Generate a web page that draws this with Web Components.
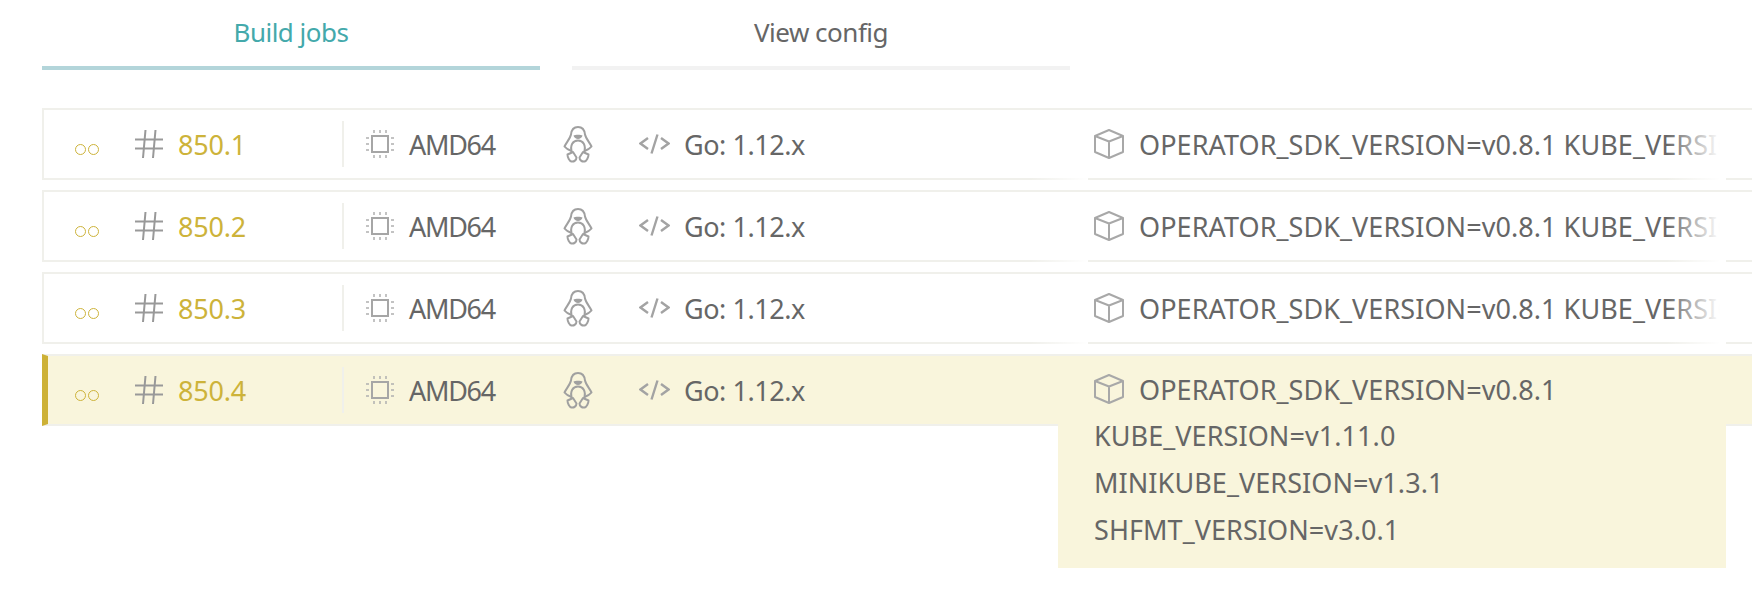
<!DOCTYPE html>
<html>
<head>
<meta charset="utf-8">
<title>Build jobs</title>
<style>
  html, body { margin: 0; height: 592px; overflow: hidden; background: #fff; }
  body { font-family: "Noto Sans", sans-serif; color: #666; }
</style>
</head>
<body>
<job-page>
  <job-tabs slot="tabs">
    <job-tab active>Build jobs</job-tab>
    <job-tab>View config</job-tab>
  </job-tabs>
  <job-row number="850.1">OPERATOR_SDK_VERSION=v0.8.1 KUBE_VERSION=v1.11.0 MINIKUBE_VERSION=v1.3.1 SHFMT_VERSION=v3.0.1</job-row>
  <job-row number="850.2">OPERATOR_SDK_VERSION=v0.8.1 KUBE_VERSION=v1.11.0 MINIKUBE_VERSION=v1.3.1 SHFMT_VERSION=v3.0.1</job-row>
  <job-row number="850.3">OPERATOR_SDK_VERSION=v0.8.1 KUBE_VERSION=v1.11.0 MINIKUBE_VERSION=v1.3.1 SHFMT_VERSION=v3.0.1</job-row>
  <job-row number="850.4" active>OPERATOR_SDK_VERSION=v0.8.1 KUBE_VERSION=v1.11.0 MINIKUBE_VERSION=v1.3.1 SHFMT_VERSION=v3.0.1</job-row>
</job-page>

<script>
class JobPage extends HTMLElement {
    constructor() {
        super();
        this.attachShadow({ mode: 'open' });
        this.shadowRoot.innerHTML = `
            <style>
                :host { display: block; padding: 0 0 0 42px; }
                .rows { display: flex; flex-direction: column; gap: 10px; margin-top: 38px; }
            </style>
            <slot name="tabs"></slot>
            <div class="rows"><slot></slot></div>
        `;
    }
}

class JobTabs extends HTMLElement {
    constructor() {
        super();
        this.attachShadow({ mode: 'open' });
        this.shadowRoot.innerHTML = `
            <style>
                :host { display: flex; gap: 32px; }
            </style>
            <slot></slot>
        `;
    }
}

class JobTab extends HTMLElement {
    constructor() {
        super();
        this.attachShadow({ mode: 'open' });
        this.shadowRoot.innerHTML = `
            <style>
                :host {
                    display: block;
                    box-sizing: border-box;
                    width: 498px;
                    height: 70px;
                    padding-top: 14px;
                    border-bottom: 4px solid #f2f2f2;
                    text-align: center;
                    font-size: 26px;
                    line-height: 36px;
                    letter-spacing: -0.5px;
                    color: #666;
                }
                :host([active]) {
                    border-bottom-color: #b3d5da;
                    color: #44a9ab;
                }
            </style>
            <slot></slot>
        `;
    }
}

const ICONS = {
    hash: `<svg width="28" height="28" viewBox="0 0 28 28" fill="none" stroke="#999" stroke-width="2">
        <path d="M0 9.5h28M0 18.5h28M10.5 0L8 28M20.5 0L18 28"/></svg>`,
    chip: `<svg width="28" height="28" viewBox="0 0 28 28" fill="none">
        <rect x="6" y="6" width="16" height="16" stroke="#a6a6a6" stroke-width="2"/>
        <path stroke="#b0b0b0" stroke-width="1.5" d="M8 0v3M14 0v3M20 0v3M8 25v3M14 25v3M20 25v3M0 8h3M0 14h3M0 20h3M25 8h3M25 14h3M25 20h3"/></svg>`,
    linux: `<svg width="30" height="37" viewBox="0 0 30 37" fill="none" stroke="#a0a0a0" stroke-width="2" stroke-linejoin="round">
        <path d="M8.5 25C6 24 3 22.5 1.5 20.5C3 17 7 13 8 8.5C8.5 3.5 11 1 15 1C19 1 21.5 3.5 22 8.5C23 13 27 17 28.5 20.5C27 22.5 24 24 21.5 25"/>
        <path d="M9 26.5C6.5 19 10 14.5 15 14.5C20 14.5 23.5 19 21 26.5"/>
        <path fill="#a0a0a0" stroke="none" d="M10.5 9.5C12 8.5 18 8.5 19.5 9.5C19 11.5 17 13 15 13C13 13 11 11.5 10.5 9.5Z"/>
        <path d="M4.5 28.5L10 26L13.5 31.5C13.5 34 11 36 8.5 35.5C6.5 35 4.5 31.5 4.5 28.5Z"/>
        <path d="M25.5 28.5L20 26L16.5 31.5C16.5 34 19 36 21.5 35.5C23.5 35 25.5 31.5 25.5 28.5Z"/></svg>`,
    code: `<svg width="31" height="20" viewBox="0 0 31 20" fill="none" stroke="#a3a3a3" stroke-width="2.4">
        <path d="M9 4L1.5 9.5L9 15M22 4L29.5 9.5L22 15M18.5 0.5L12.5 19.5"/></svg>`,
    cube: `<svg width="30" height="30" viewBox="0 0 30 30" fill="none" stroke="#a8a8a8" stroke-width="2" stroke-linejoin="round">
        <path d="M15 1L29 7V23L15 29L1 23V7Z"/><path d="M1 7L15 12.5L29 7M15 12.5V29"/></svg>`
};

class JobRow extends HTMLElement {
    constructor() {
        super();
        this.attachShadow({ mode: 'open' });
    }

    connectedCallback() {
        const number = this.getAttribute('number') || '';
        const vars = this.textContent.trim().split(/\s+/);
        this.shadowRoot.innerHTML = `
            <style>
                :host {
                    display: block;
                    box-sizing: border-box;
                    width: 1760px;
                    height: 72px;
                    border: 2px solid #f0f0eb;
                    font-size: 27px;
                    line-height: 36px;
                    color: #666;
                }
                :host([active]) {
                    background: #f9f5dc;
                    border-left: 6px solid #cdb136;
                }
                .inner { display: flex; align-items: center; height: 68px; }
                :host([active]) .inner { margin-left: -4px; }
                .status { display: flex; gap: 2px; margin: 10px 0 0 31px; width: 60px; }
                .status i { width: 11px; height: 11px; border: 1.5px solid #cdb33a; border-radius: 50%; box-sizing: border-box; }
                .number { display: flex; align-items: center; gap: 15px; width: 207px; height: 46px; border-right: 2px solid #f0f0eb; color: #cdb33a; letter-spacing: -0.2px; }
                .inner span.t { padding-top: 2px; }
                svg { display: block; flex: none; }
                .arch { display: flex; align-items: center; gap: 15px; margin-left: 22px; width: 197px; letter-spacing: -1.3px; }
                .os { width: 76px; }
                .lang { display: flex; align-items: center; gap: 14px; width: 419px; letter-spacing: -0.45px; }
                .env { position: relative; flex: none; width: 668px; height: 68px; align-self: flex-start; }
                /* the row's bottom border fades out under the env column */
                .env::before, .env::after {
                    content: "";
                    position: absolute;
                    top: 68px;
                    height: 2px;
                }
                .env::before { left: -28px; width: 58px; background: linear-gradient(to right, rgba(255,255,255,0), #fff); }
                .env::after { right: 0; width: 60px; background: linear-gradient(to right, rgba(255,255,255,0), #fff 90%); }
                :host([active]) .env::before, :host([active]) .env::after { display: none; }
                .box {
                    position: absolute;
                    top: 0; left: 0; right: 0;
                    height: 68px;
                    box-sizing: border-box;
                    padding: 17px 0 0 36px;
                    overflow: hidden;
                    white-space: nowrap;
                    background: #fff;
                }
                .box::after {
                    content: "";
                    position: absolute;
                    top: 0; right: 0; bottom: 0;
                    width: 60px;
                    background: linear-gradient(to right, rgba(255,255,255,0), #fff 90%);
                }
                .first { display: flex; align-items: center; gap: 15px; }
                .first svg { margin-bottom: 2px; }
                .line { display: inline; margin-right: 7px; letter-spacing: 0.07px; }
                :host([active]) .box {
                    height: 212px;
                    background: #f9f5dc;
                    white-space: normal;
                    padding-top: 16px;
                }
                :host([active]) .box::after { display: none; }
                :host([active]) .line { display: block; margin: 0; height: 47px; line-height: 47px; }
                :host([active]) .first { height: 36px; margin-bottom: 4px; }
                :host([active]) .first .line { line-height: 36px; height: 36px; }
            </style>
            <div class="inner">
                <div class="status"><i></i><i></i></div>
                <div class="number">${ICONS.hash}<span class="t">${number}</span></div>
                <div class="arch">${ICONS.chip}<span class="t">AMD64</span></div>
                <div class="os">${ICONS.linux}</div>
                <div class="lang">${ICONS.code}<span class="t">Go: 1.12.x</span></div>
                <div class="env"><div class="box">
                    ${this.hasAttribute('active')
                        ? `<div class="first">${ICONS.cube}<span class="line">${vars[0]}</span></div>` + vars.slice(1).map(v => `<span class="line">${v}</span>`).join('')
                        : `<div class="first">${ICONS.cube}<span>${vars.map(v => `<span class="line">${v}</span>`).join('')}</span></div>`}
                </div></div>
            </div>
        `;
    }
}

customElements.define('job-page', JobPage);
customElements.define('job-tabs', JobTabs);
customElements.define('job-tab', JobTab);
customElements.define('job-row', JobRow);
</script>
</body>
</html>
